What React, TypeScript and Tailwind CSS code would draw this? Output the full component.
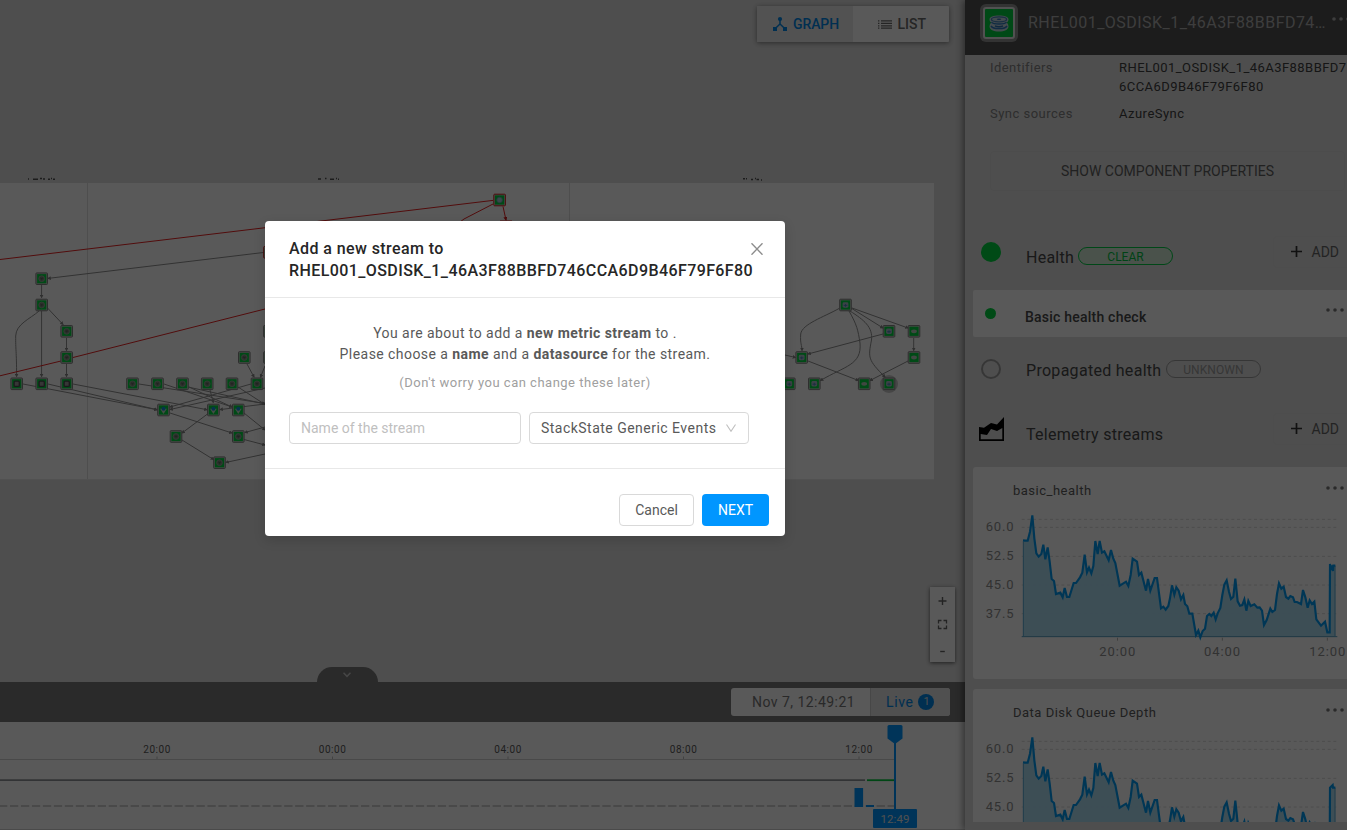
import React from "react";

type Pt = [number, number];

const SERIES_BODY =
  "174,241 180,242 188,242 195,215 202,166 208,235 214,280 221,290 229,282 235,254 241,298 248,262 254,305 260,357 267,363 273,402 286,398 293,412 299,384 306,411 313,411 326,369 333,369 345,352 352,338 359,284 366,337 372,323 379,340 385,318 391,243 398,282 404,243 411,278 418,274 431,301 438,270 445,296 451,309 464,377 483,365 490,378 497,345 503,296 516,305 522,345 529,338 543,392 549,357 556,392 569,354 576,354 588,445 595,440 602,449 610,438 615,415 621,376 628,404 634,382 641,392 648,418 655,405 660,432 667,439 673,461 682,461 693,525 700,512 706,532 713,513 720,506 726,468 733,462 739,468 746,458 752,478 758,460 766,444 772,405 778,374 785,361 792,395 798,417 805,410 811,356 818,424 825,437 832,435 838,419 844,452 850,423 857,438 868,433 877,443 884,442 891,452 897,495 905,480 916,446 922,456 930,450 936,402 942,370 949,386 956,380 963,411 970,416 976,408 984,412 989,426 996,426 1008,432 1014,390 1021,412 1028,443 1034,421 1041,432 1048,425 1054,478 1068,497 1080,485 1087,517 1094,517";
const TAIL_A = " 1095,312 1098,330 1100,316 1104,333 1105,317 1111,317";
const TAIL_B = " 1095,317 1103,309 1104,317 1111,317";

const Y_TICKS: [string, number][] = [
  ["60.0", 213],
  ["52.5", 300],
  ["45.0", 387],
  ["37.5", 474],
];
const X_TICKS: [string, number][] = [
  ["20:00", 403],
  ["04:00", 717],
  ["12:00", 1033],
];

function MetricChart({ tail, clipped }: { tail: string; clipped?: boolean }) {
  const line = SERIES_BODY + tail;
  const yTicks = clipped ? Y_TICKS.slice(0, 3) : Y_TICKS;
  const xTicks = clipped ? [] : X_TICKS;
  return (
    <svg className="block" width="374" height="180" viewBox="24 117 1122 540">
      {[178, 202, 289, 375, 461].map((y) => (
        <line key={y} x1="170" x2="1117" y1={y} y2={y} stroke="#dadada" strokeWidth="3" strokeDasharray="9 8" />
      ))}
      <polygon points={"174,531 " + line + " 1111,531"} fill="#abdcf3" fillOpacity="0.95" />
      <line x1="170" x2="1117" y1="530" y2="530" stroke="#5a9fbf" strokeWidth="3" />
      <line x1="175" x2="175" y1="245" y2="531" stroke="#5cacd4" strokeWidth="3" />
      <line x1="1110" x2="1110" y1="317" y2="531" stroke="#5cacd4" strokeWidth="3" />
      {[457.5, 772, 1087].map((x) => (
        <line key={x} x1={x} x2={x} y1="533" y2="542" stroke="#b5b5b5" strokeWidth="3" />
      ))}
      <polyline points={line} fill="none" stroke="#009cf2" strokeWidth="6.5" strokeLinejoin="miter" />
      <g fill="#8f8f8f" fontSize="39" fontFamily="Roboto, sans-serif">
        {yTicks.map(([t, y]) => (
          <text key={t} x="62" y={y - 1} textLength="84">
            {t}
          </text>
        ))}
        {xTicks.map(([t, x]) => (
          <text key={t} x={x} y="588" textLength="108">
            {t}
          </text>
        ))}
      </g>
    </svg>
  );
}

function Dots({ color = "#7a7a7a" }: { color?: string }) {
  return (
    <svg className="block shrink-0" width="22" height="6" viewBox="0 0 22 6" fill={color}>
      <circle cx="4" cy="3" r="1.8" />
      <circle cx="11" cy="3" r="1.8" />
      <circle cx="18" cy="3" r="1.8" />
    </svg>
  );
}

function StreamCard({ title, tail, clipped }: { title: string; tail: string; clipped?: boolean }) {
  return (
    <div className="h-[212px] w-[390px] shrink-0 rounded-[3px] bg-white">
      <div className="flex h-8 items-start justify-between pl-10 pr-[17px]">
        <span className="pt-[14px] text-[13px] leading-5 tracking-[0.5px] text-[#5c5c5c]">{title}</span>
        <div className="pt-[18px]">
          <Dots />
        </div>
      </div>
      <MetricChart tail={tail} clipped={clipped} />
    </div>
  );
}

const GREEN_NODES: Pt[] = [
  [41.7, 278.7], [41.7, 305], [66.7, 331.3], [66.7, 357.5],
  [244.3, 357.5], [269.5, 331.3], [269.5, 357.5],
  [132.5, 383.8], [157.5, 383.8], [182.5, 383.8], [207.2, 383.8], [232, 383.8], [257, 383.8],
  [176, 436.5], [238.3, 436.5], [219.5, 462.7],
];
const DARK_NODES: Pt[] = [[16.7, 383.8], [41.7, 383.8], [66.7, 383.8]];
const PIN_NODES: Pt[] = [[163.5, 410], [213.4, 410], [238.3, 410]];
const BLUE_NODES: Pt[] = [
  [845.5, 305], [889, 331.3], [801.7, 357.5], [789.3, 383.8], [814.3, 383.8], [889, 383.8],
];
const DISK_NODES: Pt[] = [[914, 331.3], [914, 357.5], [864.2, 383.8]];

function GraphNode({ at, kind }: { at: Pt; kind: "plain" | "dark" | "pin" | "blue" | "disk" | "alert" }) {
  return (
    <g transform={`translate(${at[0]} ${at[1]})`}>
      <rect x="-5.8" y="-5.8" width="11.6" height="11.6" rx="0.8" fill="#c5cdc5" stroke={kind === "alert" ? "#d42222" : "#858585"} strokeWidth="1" />
      <rect x="-4.6" y="-4.6" width="9.2" height="9.2" fill="#00d440" />
      {kind === "plain" && (
        <>
          <circle r="2.9" fill="#7c8c7e" stroke="#99a89b" strokeWidth="0.8" />
          <path d="M-1.6 0H1.6M-1 -1.4L0 0L1 -1.4M0 0V1.5" fill="none" stroke="#565e57" strokeWidth="0.6" />
        </>
      )}
      {kind === "dark" && <rect x="-2.6" y="-2.6" width="5.2" height="5.2" rx="1" fill="#9a9f9a" stroke="#4d464d" strokeWidth="1.3" />}
      {kind === "pin" && (
        <>
          <path d="M-3.4 -1.2L0 4L3.4 -1.2Z" fill="#c5d6c8" />
          <circle cy="-1.2" r="2" fill="#1090dc" />
        </>
      )}
      {kind === "blue" && (
        <>
          <rect x="-2.9" y="-2.7" width="5.8" height="5.4" rx="1.4" fill="#a8bcc8" />
          <path d="M-1.800 0.4H1.800M0 -1V1.800" stroke="#4a80c0" strokeWidth="0.9" />
        </>
      )}
      {kind === "disk" && <ellipse rx="2.9" ry="1.9" fill="#b8ccbc" />}
      {kind === "alert" && <circle r="2.8" fill="#a8c8d8" stroke="#6da5b5" strokeWidth="0.8" />}
    </g>
  );
}

const EDGES = [
  "M265 252.3L48 278.4", "M41.6 285V297.5", "M41.6 311V376.5",
  "M39 311C30 319 16 324 15.7 336C15.5 350 16.6 350 16.6 376.5",
  "M47.5 308L63 324.5", "M66.5 338V350.5", "M66.5 364V376.5",
  "M23 384L157 409.7", "M48 384L157 409.7", "M73 384L207 409.7",
  "M139 384L265 403.5", "M164 384L232 407", "M189 387L232 407", "M210 390L213.3 402.5",
  "M247 364L254 377", "M265 366L260.5 377", "M251 384L170 407", "M265 388L170 409.5",
  "M265 404L220 409.6", "M188 387L265 404", "M238 387L265 404.5",
  "M207.5 414L182 433", "M170 413L232 433", "M244 413L265 430", "M182 440L213.5 459.5",
  "M265 427L245 432.5", "M244 439.5L265 445", "M265 454L226 462.4",
  "M839 308.5C824 317 802 324 800.7 334C800 344 802 345 802 350.5",
  "M851 308L883 328", "M852 308L908 328", "M883 334L808 354", "M913.7 338V350.5",
  "M849 311C857 325 858 330 860 343C862 365 845 366 820.5 380.5",
  "M850 311C864 320 873 327 871.5 340C868 358 868 360 885 377",
  "M808 361L858.5 380.5", "M908 361L870 380.5", "M785 355L795.5 357.5",
];

const RED_EDGES = [
  "M493 200.4L0 259.5", "M0 375.8L61 361", "M73 357.5L265 309",
  "M493 204L464 219L460 222", "M503 206.5L506 220", "M500 221H512",
];

function TopologyGraph() {
  return (
    <svg className="block" width="965" height="682" viewBox="0 0 965 682">
      <defs>
        <marker id="tip" viewBox="0 0 6 6" refX="4.5" refY="3" markerWidth="3.8" markerHeight="3.8" orient="auto">
          <path d="M0 0L6 3L0 6Z" fill="#888888" />
        </marker>
        <marker id="tip-red" viewBox="0 0 6 6" refX="4.5" refY="3" markerWidth="4" markerHeight="4" orient="auto">
          <path d="M0 0L6 3L0 6Z" fill="#d42222" />
        </marker>
      </defs>
      <rect x="0" y="183" width="934" height="296.3" fill="#ffffff" />
      <path d="M87.5 183V479M569.5 183V479" stroke="#dedede" strokeWidth="1" />
      <g stroke="#505050" strokeWidth="1.5" fill="none">
        <path d="M28 179H29M33 179.300H38M40 178.500H42M43 179H45M48 179.300H50M51 178.500H52M53 179.300H55" />
        <path d="M318 179H321M325 178.600H326.500M330 179.300H334M336 178.500H337M338 179.300H339" />
        <path d="M743 178.700H745M746 178.700H747M751 179.500H753M755 178.500H756M756.500 179.500H759M761 180H762" />
      </g>
      <circle cx="889" cy="384" r="9" fill="#c9c9c9" />
      {EDGES.map((d, i) => (
        <path key={i} d={d} fill="none" stroke="#909090" strokeWidth="1" markerEnd="url(#tip)" />
      ))}
      {RED_EDGES.map((d, i) => (
        <path key={i} d={d} fill="none" stroke="#ea2424" strokeWidth="1" markerEnd={i === 4 ? "url(#tip-red)" : undefined} />
      ))}
      {GREEN_NODES.map((n, i) => (
        <GraphNode key={i} at={n} kind="plain" />
      ))}
      {DARK_NODES.map((n, i) => (
        <GraphNode key={i} at={n} kind="dark" />
      ))}
      {PIN_NODES.map((n, i) => (
        <GraphNode key={i} at={n} kind="pin" />
      ))}
      {BLUE_NODES.map((n, i) => (
        <GraphNode key={i} at={n} kind="blue" />
      ))}
      {DISK_NODES.map((n, i) => (
        <GraphNode key={i} at={n} kind="disk" />
      ))}
      <GraphNode at={[499.6, 200]} kind="alert" />
      <GraphNode at={[269.5, 252.3]} kind="alert" />
    </svg>
  );
}

function ViewSwitch() {
  return (
    <div className="absolute left-[757px] top-[6px] flex h-9 w-48 rounded-[1px] bg-white text-[14px] font-medium shadow-[0_1px_5px_rgba(0,0,0,0.45)]">
      <div className="flex w-24 items-center bg-[#eaeaea] pl-4 text-[#0088e8]">
        <svg width="14" height="14" viewBox="0 0 14 14" fill="currentColor">
          <circle cx="7" cy="2.1" r="2.1" />
          <rect x="0" y="10" width="4" height="4" />
          <rect x="10" y="10" width="4" height="4" />
          <path d="M7 3V7L2.3 11.5M7 7L11.7 11.5" stroke="currentColor" strokeWidth="1.5" fill="none" />
        </svg>
        <span className="pl-[6px] tracking-[-0.1px]">GRAPH</span>
      </div>
      <div className="flex w-24 items-center pl-[25px] text-[#6b6b6b]">
        <svg width="14" height="9" viewBox="0 0 14 9" stroke="currentColor" strokeWidth="1.2">
          <path d="M0 .8H1.4M0 3.3H1.4M0 5.8H1.4M0 8.2H1.4M3 .8H14M3 3.3H14M3 5.8H14M3 8.2H14" />
        </svg>
        <span className="pl-[5.5px]">LIST</span>
      </div>
    </div>
  );
}

function ZoomControls() {
  return (
    <div className="absolute left-[930px] top-[587px] flex h-[75px] w-[25px] flex-col items-center bg-white shadow-[0_1px_4px_rgba(0,0,0,0.6)]">
      <svg width="25" height="75" viewBox="0 0 25 75" fill="none" stroke="#666666" strokeWidth="1.4">
        <path d="M8.5 14H16.5M12.5 10V18" />
        <path d="M8.5 36.5V33.5H11.5M13.5 33.5H16.5V36.5M16.5 38.5V41.5H13.5M11.5 41.5H8.5V38.5" strokeWidth="1.3" />
        <path d="M10.2 64.5H14.8" />
      </svg>
    </div>
  );
}

function Timeline() {
  return (
    <svg className="block bg-white" width="965" height="108" viewBox="0 722 965 108">
      <line x1="0" x2="895" y1="759.5" y2="759.5" stroke="#d0d0d0" strokeWidth="1" />
      <line x1="0" x2="865" y1="780.2" y2="780.2" stroke="#909398" strokeWidth="1.8" />
      <line x1="867" x2="895" y1="780.2" y2="780.2" stroke="#00c83c" strokeWidth="1.8" />
      <line x1="-1" x2="895" y1="806" y2="806" stroke="#d0d0d0" strokeWidth="1.8" strokeDasharray="8.3 2.67" />
      <rect x="854.5" y="788" width="8.6" height="19" fill="#0096ff" />
      <rect x="866" y="805" width="8" height="2" fill="#0096ff" />
      <g fill="#5a5a5a" fontSize="10" fontFamily="Roboto, sans-serif">
        {(
          [
            ["20:00", 157],
            ["00:00", 332.5],
            ["04:00", 508],
            ["08:00", 683.5],
            ["12:00", 859],
          ] as [string, number][]
        ).map(([t, x]) => (
          <g key={t}>
            <text x={x - 13.7} y="753" textLength="27">
              {t}
            </text>
            <line x1={x} x2={x} y1="756.5" y2="759" stroke="#bdbdbd" />
          </g>
        ))}
      </g>
      <path d="M889 725H901Q902.5 725 902.5 726.5V738.5L895 744L887.5 738.5V726.5Q887.5 725 889 725Z" fill="#0096ff" />
      <line x1="895" x2="895" y1="740" y2="810" stroke="#0096ff" strokeWidth="2" />
      <rect x="873" y="809" width="44" height="19" rx="1" fill="#0096ff" />
      <text x="880.5" y="822.8" fontSize="11.5" fill="#e5e5e5" textLength="29" fontFamily="Roboto, sans-serif">
        12:49
      </text>
      <line x1="0" x2="965" y1="829.5" y2="829.5" stroke="#d4d4d4" />
    </svg>
  );
}

function AddButton() {
  return (
    <div className="flex h-8 w-[90px] items-center rounded-[4px] border border-[#dcdcdc] pl-[17px] text-[14px] text-[#666666]">
      <svg width="11" height="12" viewBox="0 0 11 12" stroke="#333" strokeWidth="1.7">
        <path d="M0 5.5H11M5.5 0V11" />
      </svg>
      <span className="pl-[9.5px] pt-px">ADD</span>
    </div>
  );
}

function DetailsPanel() {
  return (
    <aside className="z-10 flex h-[830px] w-[382px] flex-col overflow-hidden bg-[#dfdfdf] shadow-[-2px_0_7px_rgba(0,0,0,0.45)]">
      <header className="flex h-[55px] shrink-0 bg-[#515151] pl-[15px] pt-1">
        <div className="flex h-[38px] w-[38px] shrink-0 items-center justify-center rounded-[6px] bg-[#929292]">
          <div className="flex h-8 w-8 shrink-0 items-center justify-center rounded-[3px] border-2 border-[#e8e8e8] bg-[#00d040]">
            <svg width="20" height="17" viewBox="0 0 20 17">
              <path d="M.5 4.200C.5 1.800 4.500 .4 10 .4S19.500 1.800 19.500 4.200C19.500 5.800 18.800 6.800 17.800 7.600Q19.500 9 19.500 11.500C19.500 14.500 15.500 16.600 10 16.600S.5 14.500 .5 11.500Q.5 9 2.200 7.600C1.200 6.800 .5 5.800 .5 4.200Z" fill="#c4d8e0" />
              <ellipse cx="10" cy="4.300" rx="7.600" ry="2.500" fill="none" stroke="#4988bd" strokeWidth="1.300" />
              <ellipse cx="10" cy="4.200" rx="2.300" ry=".8" fill="#3474ad" />
              <path d="M2.400 7.200C5 9.500 15 9.500 17.600 7.200M2 10.800C4 14.500 16 14.500 18 10.800" fill="none" stroke="#2f7cc0" strokeWidth="1.500" />
              <path d="M6 10.800C8 12 12 12 14 10.800" fill="none" stroke="#2f74b4" strokeWidth="1.400" />
            </svg>
          </div>
        </div>
        <span className="shrink-0 pl-[10px] pt-[7px] text-[16px] leading-6 tracking-[0.46px] whitespace-nowrap text-[#b0b0b0]">
          RHEL001_OSDISK_1_46A3F88BBFD74…
        </span>
        <div className="-ml-px shrink-0 pl-[5px] pt-[12px]">
          <Dots color="#b0b0b0" />
        </div>
      </header>

      <div className="flex h-[767px] shrink-0 flex-col overflow-hidden">
        <div className="flex h-[47px] shrink-0 pl-[25px] pt-[3px] text-[13px] leading-[19px] tracking-[0.45px]">
          <span className="w-[129px] shrink-0 text-[#838383]">Identifiers</span>
          <span className="whitespace-nowrap text-[#404040]">
            RHEL001_OSDISK_1_46A3F88BBFD7
            <br />
            6CCA6D9B46F79F6F80
          </span>
        </div>
        <div className="flex h-[49px] shrink-0 pl-[25px] pt-[2px] text-[13px] leading-[19px] tracking-[0.48px]">
          <span className="w-[129px] shrink-0 text-[#838383]">Sync sources</span>
          <span className="text-[#404040]">AzureSync</span>
        </div>
        <div className="ml-[25px] flex h-10 w-[355px] shrink-0 items-center justify-center rounded-[4px] border border-[#dbdbdb] text-[14px] text-[#606060]">
          SHOW COMPONENT PROPERTIES
        </div>

        <div className="mt-[45px] flex h-8 w-[400px] shrink-0 items-start pl-4">
          <div className="mt-[6px] h-5 w-5 rounded-full bg-[#00d440]" />
          <span className="w-[52px] pl-[25px] pt-[11px] text-[16px] leading-[22px] tracking-[0.25px] whitespace-nowrap text-[#484848]">Health</span>
          <div className="ml-[25px] mt-[11px] flex h-[18px] w-[95px] items-center justify-center rounded-full border border-[#00cc44] bg-[#d3ead8] pt-px text-[12px] text-[#00c040]">CLEAR</div>
          <div className="ml-[100px]">
            <AddButton />
          </div>
        </div>

        <div className="ml-2 mt-[22px] flex h-[47px] w-[390px] shrink-0 rounded-[2px] bg-white">
          <div className="ml-[12px] mt-[18px] h-[11px] w-[11px] rounded-full bg-[#00d440]" />
          <span className="pl-[29px] pt-[17px] text-[14px] font-medium leading-5 tracking-[0.22px] text-[#4a4a4a]">Basic health check</span>
          <div className="ml-auto mr-[17px] pt-[17px]">
            <Dots />
          </div>
        </div>

        <div className="mt-[22px] flex h-[58px] shrink-0 pl-4">
          <div className="h-5 w-5 rounded-full border-2 border-[#9c9c9c]" />
          <span className="pl-[25px] pt-px text-[16px] leading-[22px] tracking-[0.29px] text-[#484848]">Propagated health</span>
          <div className="ml-[4.5px] mt-px flex h-[18px] w-[95px] items-center justify-center rounded-full border border-[#9c9c9c] pt-px text-[12px] tracking-[0.1px] text-[#9c9c9c]">UNKNOWN</div>
        </div>

        <div className="-mt-[4px] flex h-[54px] w-[400px] shrink-0 pl-[14px]">
          <svg className="mt-[4px]" width="25" height="24" viewBox="0 0 25 24">
            <path d="M0 10L5 10.800L12 6L18 7.500L25 0V24H0ZM1.700 17V22.300H23.300V11L18 14L12 12L8 18Z" fill="#000" fillRule="evenodd" />
          </svg>
          <span className="w-[259px] pl-[22px] pt-[11px] text-[16px] leading-[22px] tracking-[0.27px] text-[#484848]">Telemetry streams</span>
          <div className="-ml-[25px] pl-[35px]">
            <AddButton />
          </div>
        </div>

        <div className="flex shrink-0 flex-col gap-[10px] pl-2">
          <StreamCard title="basic_health" tail={TAIL_A} />
          <StreamCard title="Data Disk Queue Depth" tail={TAIL_B} clipped />
        </div>
      </div>
    </aside>
  );
}

function StreamDialog() {
  return (
    <div className="absolute left-[265px] top-[221px] flex h-[315px] w-[520px] flex-col rounded-[4px] bg-white shadow-[0_4px_12px_rgba(0,0,0,0.15)]">
      <div className="flex h-[77px] justify-between border-b border-[#e8e8e8] pl-6 pt-[17px] text-[16px] font-medium leading-[22px] text-[#262626]">
        <div className="tracking-[0.41px]">
          Add a new stream to
          <br />
          RHEL001_OSDISK_1_46A3F88BBFD746CCA6D9B46F79F6F80
        </div>
        <svg className="absolute right-[22px] top-[22px]" width="12" height="12" viewBox="0 0 12 12" stroke="#8c8c8c" strokeWidth="1.4">
          <path d="M.5 .3L11.500 11.700M11.500 .3L.5 11.700" />
        </svg>
      </div>
      <div className="flex h-[171px] flex-col items-center border-b border-[#e8e8e8] pt-[25px] text-[14px] leading-[21px] tracking-[0.44px] text-[#595959]">
        <p className="text-center">
          You are about to add a <b>new metric stream</b> to .
          <br />
          Please choose a <b>name</b> and a <b>datasource</b> for the stream.
        </p>
        <p className="pt-[8px] text-[13px] leading-5 tracking-[0.5px] text-[#a0a0a0]">(Don't worry you can change these later)</p>
        <div className="flex w-full gap-2 pl-6 pt-[19px]">
          <div className="flex h-8 w-[232px] items-center rounded-[4px] border border-[#d9d9d9] pl-[11px] tracking-normal text-[#bfbfbf]">Name of the stream</div>
          <div className="flex h-8 w-[220px] items-center justify-between rounded-[4px] border border-[#d9d9d9] pl-[11px] pr-3">
            <span className="whitespace-nowrap tracking-[0.48px]">StackState Generic Events</span>
            <svg width="10" height="8" viewBox="0 0 10 8" fill="none" stroke="#bfbfbf" strokeWidth="1.100">
              <path d="M.5 .5L5 7.300L9.500 .5" />
            </svg>
          </div>
        </div>
      </div>
      <div className="flex h-[67px] justify-end gap-2 pr-4 pt-[25px] text-[14px]">
        <div className="flex h-8 w-[75px] items-center justify-center rounded-[4px] border border-[#d9d9d9] text-[#595959]">Cancel</div>
        <div className="flex h-8 w-[67px] items-center justify-center rounded-[4px] bg-[#0096ff] text-white">NEXT</div>
      </div>
    </div>
  );
}

export default function App() {
  return (
    <div className="relative flex h-[830px] w-[1347px] overflow-hidden bg-[#dfdfdf] font-[Roboto,sans-serif]">
      <main className="relative flex w-[965px] shrink-0 flex-col">
        <TopologyGraph />
        <div className="absolute left-[317px] top-[667px] flex h-[15px] w-[61px] justify-center rounded-t-[15px] bg-[#787878] pr-px pt-[5px]">
          <svg width="8" height="6" viewBox="0 0 8 6" fill="none" stroke="#c8c8c8" strokeWidth="1.500">
            <path d="M.5 .7L4 4.300L7.500 .7" />
          </svg>
        </div>
        <div className="flex h-10 items-center justify-end bg-[#787878] pr-[15px]">
          <div className="flex h-7 w-[219px] overflow-hidden rounded-[3px] bg-white text-[14px]">
            <div className="flex w-[140px] items-center border-r border-[#cccccc] pl-[21px] tracking-[0.46px] whitespace-nowrap text-[#777777]">Nov 7, 12:49:21</div>
            <div className="flex flex-1 items-center bg-[#e4e4e4] pl-[15px] tracking-[0.6px] text-[#0088e8]">
              Live
              <span className="ml-[5px] flex h-4 w-4 items-center justify-center rounded-full bg-[#0088e8] text-[11px] tracking-normal text-[#dddddd]">1</span>
            </div>
          </div>
        </div>
        <Timeline />
        <ViewSwitch />
        <ZoomControls />
      </main>
      <DetailsPanel />
      <div className="absolute inset-0 z-20 bg-black/65">
        <StreamDialog />
      </div>
    </div>
  );
}
